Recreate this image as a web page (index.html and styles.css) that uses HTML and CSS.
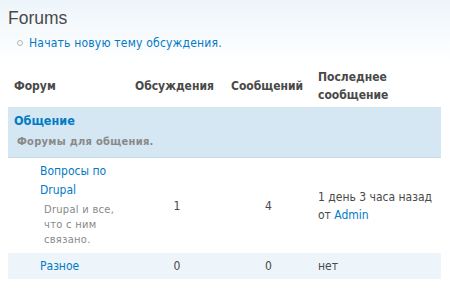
FILE: index.html
```html
<!DOCTYPE html>
<html lang="ru">
<head>
<meta charset="utf-8" />
<title>Forums</title>
<link rel="stylesheet" href="styles.css">
</head>
<body>
  <div class="page">
    <h2 class="title">Forums</h2>
    <ul class="links">
      <li><a href="#">Начать новую тему обсуждения.</a></li>
    </ul>
    <table class="forum">
      <thead>
        <tr>
          <th class="col-name">Форум</th>
          <th class="col-topics">Обсуждения</th>
          <th class="col-posts">Сообщений</th>
          <th class="col-last">Последнее сообщение</th>
        </tr>
      </thead>
      <tbody>
        <tr class="container">
          <td colspan="4">
            <div class="name"><a href="#">Общение</a></div>
            <div class="description">Форумы для общения.</div>
          </td>
        </tr>
        <tr class="odd">
          <td class="cell-name">
            <div class="name"><a href="#">Вопросы по Drupal</a></div>
            <div class="description">Drupal и все, что с ним связано.</div>
          </td>
          <td class="num">1</td>
          <td class="num">4</td>
          <td class="last-reply">1 день 3 часа назад<br>от <a href="#">Admin</a></td>
        </tr>
        <tr class="even">
          <td class="cell-name">
            <div class="name"><a href="#">Разное</a></div>
          </td>
          <td class="num">0</td>
          <td class="num">0</td>
          <td class="last-reply">нет</td>
        </tr>
      </tbody>
    </table>
  </div>
</body>
</html>
```

FILE: styles.css
```css
html, body {
  margin: 0;
  padding: 0;
}
body {
  background: linear-gradient(to bottom, #edf5fa 0px, #ffffff 62px) no-repeat #fff;
  font-family: "DejaVu Sans Condensed", "DejaVu Sans", Verdana, sans-serif;
  font-stretch: condensed;
  font-size: 12px;
  line-height: 18px;
  color: #494949;
  min-height: 288px;
}
a {
  color: #027ac6;
  text-decoration: none;
}
.page {
  padding: 7px 9px 0 8px;
}
.title {
  margin: 0;
  font-family: "Liberation Sans", Arial, sans-serif;
  font-stretch: normal;
  font-weight: normal;
  font-size: 17.5px;
  line-height: 22px;
  color: #494949;
}
.links {
  list-style: none;
  margin: 5px 0 0 0;
  padding: 0 0 0 21px;
}
.links li {
  position: relative;
  letter-spacing: 0.2px;
}
.links li::before {
  content: "";
  position: absolute;
  left: -12px;
  top: 6px;
  width: 4px;
  height: 4px;
  border: 1px solid #b5b5b5;
  border-radius: 50%;
}
.forum {
  margin-top: 13px;
  width: 433px;
  border-collapse: collapse;
  table-layout: fixed;
}
.forum th {
  text-align: left;
  font-weight: bold;
  padding: 3px 6px 3px;
  vertical-align: middle;
}
.col-name { width: 109px; }
.col-topics { width: 84px; }
.col-posts { width: 75px; }
.forum td {
  padding: 4px 6px;
  vertical-align: middle;
}
.container td {
  background: #d4e7f3;
  border-bottom: 1px solid #c3dbeb;
  padding: 5px 6px 6px;
}
.container .name a {
  font-weight: bold;
  font-size: 12.5px;
}
.container .description {
  margin: 3px 0 0 3px;
  font-weight: bold;
  color: #898989;
  font-size: 11px;
  letter-spacing: 0.3px;
}
.odd td {
  background: #fff;
}
.even td {
  background: #edf5fa;
}
.odd .cell-name {
  padding-top: 4px;
  padding-bottom: 6px;
}
.cell-name {
  padding-left: 32px !important;
}
.odd .cell-name .name {
  line-height: 19px;
}
.cell-name .description {
  margin: 2px 0 0 4px;
  font-size: 11px;
  line-height: 15px;
  color: #898989;
  width: 76px;
  letter-spacing: 0.3px;
}
.num {
  text-align: center;
}
```
